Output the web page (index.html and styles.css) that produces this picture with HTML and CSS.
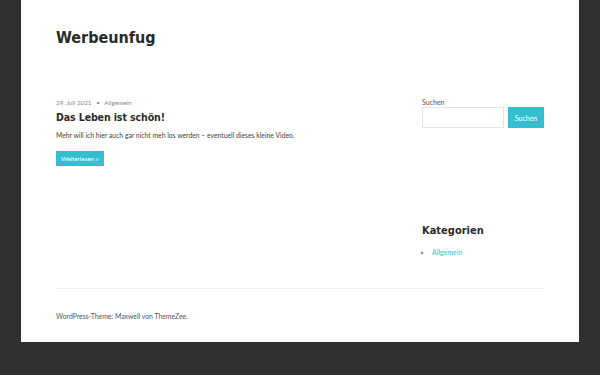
FILE: index.html
```html
<!DOCTYPE html>
<html lang="de">
<head>
    <meta charset="UTF-8">
    <meta name="viewport" content="width=device-width, initial-scale=1.0">
    <title>Werbeunfug</title>
    <link rel="stylesheet" href="styles.css">
</head>
<body>
    <div class="site">
        <header class="site-header">
            <p class="site-title">Werbeunfug</p>
        </header>

        <div class="site-content">
            <main class="content-area">
                <article class="post">
                    <div class="entry-meta">
                        <span>29. Juli 2021</span>
                        <span class="sep">&bull;</span>
                        <span>Allgemein</span>
                    </div>
                    <h2 class="entry-title">Das Leben ist schön!</h2>
                    <p class="entry-excerpt">Mehr will ich hier auch gar nicht meh los werden – eventuell dieses kleine Video.</p>
                    <a href="#" class="more-link">Weiterlesen »</a>
                </article>
            </main>

            <aside class="sidebar">
                <section class="widget widget-search">
                    <label for="s" class="search-label">Suchen</label>
                    <form class="search-form">
                        <input type="search" id="s" class="search-field">
                        <button type="button" class="search-submit">Suchen</button>
                    </form>
                </section>
                <section class="widget widget-categories">
                    <h3 class="widget-title">Kategorien</h3>
                    <ul>
                        <li><a href="#">Allgemein</a></li>
                    </ul>
                </section>
            </aside>
        </div>

        <footer class="site-footer">
            <p>WordPress-Theme: Maxwell von ThemeZee.</p>
        </footer>
    </div>
</body>
</html>
```
FILE: styles.css
```css
body { margin: 0; background-color: #303030; font-family: Lato, sans-serif; color: #333; }
.site { margin: 0 21px; padding: 0 35px; background-color: #fff; height: 342px; box-sizing: border-box; }
.site-header { padding: 26px 0 0; height: 92px; box-sizing: border-box; }
.site-title { margin: 0; font-family: "DejaVu Sans Condensed", sans-serif; font-weight: bold; font-size: 16px; line-height: 24px; color: #2a2a2a; }

.site-content { display: flex; justify-content: space-between; height: 196px; }
.content-area { flex: 1; padding-top: 6px; }
.sidebar { width: 122px; }

.entry-meta { font-size: 6.3px; color: #888; line-height: 10px; }
.entry-meta .sep { margin: 0 3px; }
.entry-title { margin: 1px 0 4px; font-family: "DejaVu Sans Condensed", sans-serif; font-size: 10.5px; letter-spacing: -0.1px; line-height: 16px; color: #2a2a2a; }
.entry-excerpt { margin: 0 0 10px; font-size: 6.8px; line-height: 12px; color: #444; }
.more-link { display: block; width: max-content; padding: 3px 5px; background-color: #33bfcf; color: #fff; font-size: 6.3px; line-height: 9px; text-decoration: none; }

.search-label { display: block; font-size: 7px; line-height: 10px; color: #555; margin-top: 5px; }
.search-form { display: flex; gap: 4px; }
.search-field { width: 82px; height: 21px; box-sizing: border-box; border: 1px solid #e4e4e4; padding: 0; margin: 0; }
.search-submit { width: 36px; height: 21px; border: none; padding: 0; background-color: #33bfcf; color: #fff; font-family: Lato, sans-serif; font-size: 7px; }

.widget-categories { margin-top: 96px; }
.widget-title { margin: 0 0 10px; font-family: "DejaVu Sans Condensed", sans-serif; font-size: 11px; line-height: 14px; color: #2a2a2a; }
.widget-categories ul { margin: 0; padding-left: 10px; list-style: circle; font-size: 7px; color: #777; }
.widget-categories a { color: #33bfcf; text-decoration: none; }

.site-footer { border-top: 1px solid #eee; padding-top: 21px; }
.site-footer p { margin: 0; font-size: 6.85px; line-height: 12px; color: #555; }
```
